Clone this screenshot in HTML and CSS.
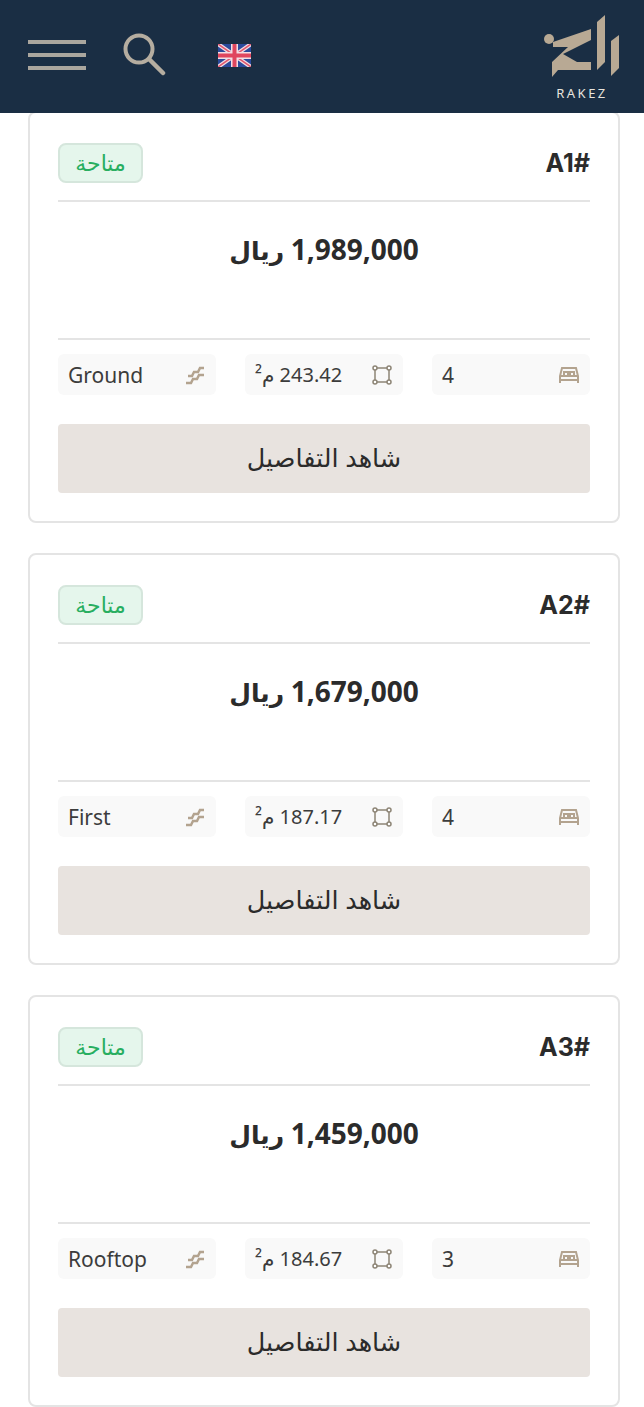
FILE: index.html
```html
<!DOCTYPE html>
<html lang="ar" dir="rtl">
<head>
    <meta charset="UTF-8">
    <meta name="viewport" content="width=device-width, initial-scale=1.0">
    <title>Rakez</title>
    <link rel="stylesheet" href="styles.css">
</head>
<body>
    <header class="topbar">
        <div class="logo">
            <svg class="logo-mark" width="76" height="72" viewBox="0 0 76 72" fill="#b8a994">
                <path d="M67 27L75 21V54L67 62Z"/>
                <path d="M53 8L61 1V48L53 56Z"/>
                <path d="M47 18V29L19 43L33 51H47V59H14L8 66V51L24 36L9 36V31Z" transform="translate(0 -3)"/>
                <circle cx="5" cy="25" r="5"/>
            </svg>
            <span class="logo-name">RAKEZ</span>
        </div>
        <div class="top-tools">
            <svg class="flag" width="33" height="23" viewBox="0 0 33 23">
                <rect width="33" height="23" fill="#2b4a9b"/>
                <path d="M0 0L33 23M33 0L0 23" stroke="#f3dfe4" stroke-width="4"/>
                <path d="M0 0L33 23M33 0L0 23" stroke="#e0566e" stroke-width="1.5"/>
                <path d="M16.5 0V23M0 11.5H33" stroke="#f3dfe4" stroke-width="7"/>
                <path d="M16.5 0V23M0 11.5H33" stroke="#e0465e" stroke-width="4"/>
            </svg>
            <svg class="search" width="44" height="46" viewBox="0 0 44 46" fill="none" stroke="#b5ada0">
                <circle cx="17" cy="17" r="13.5" stroke-width="4"/>
                <path d="M27 27L41 41" stroke-width="4.5" stroke-linecap="round"/>
            </svg>
            <div class="burger"><span></span><span></span><span></span></div>
        </div>
    </header>

    <main class="list">
        <section class="card">
            <div class="card-head">
                <span class="unit">A1#</span>
                <span class="badge">متاحة</span>
            </div>
            <div class="price"><span>1,989,000</span> <span class="currency">ريال</span></div>
            <div class="specs">
                <div class="spec">
                    <svg class="ico" viewBox="0 0 22 20" fill="none" stroke="#b3a38f" stroke-width="2"><path d="M2 18V11L4 3H18L20 11V18M2 11H20M2 15H20M6 10V7H10V10M12 10V7H16V10"/></svg>
                    <span class="val" dir="ltr">4</span>
                </div>
                <div class="spec">
                    <svg class="ico" viewBox="0 0 20 20" fill="none" stroke="#8d8576" stroke-width="1.5"><rect x="3" y="3" width="14" height="14"/><circle cx="3" cy="3" r="2" fill="#fff"/><circle cx="17" cy="3" r="2" fill="#fff"/><circle cx="3" cy="17" r="2" fill="#fff"/><circle cx="17" cy="17" r="2" fill="#fff"/></svg>
                    <span class="area">243.42 م²</span>
                </div>
                <div class="spec">
                    <svg class="ico" viewBox="0 0 22 20" fill="none" stroke="#b3a38f" stroke-width="2.5"><path d="M2 18H7L9 14H13L15 10H20M4 11H8L10 7H14L16 3H20"/></svg>
                    <span class="val" dir="ltr">Ground</span>
                </div>
            </div>
            <a class="details">شاهد التفاصيل</a>
        </section>

        <section class="card">
            <div class="card-head">
                <span class="unit">A2#</span>
                <span class="badge">متاحة</span>
            </div>
            <div class="price"><span>1,679,000</span> <span class="currency">ريال</span></div>
            <div class="specs">
                <div class="spec">
                    <svg class="ico" viewBox="0 0 22 20" fill="none" stroke="#b3a38f" stroke-width="2"><path d="M2 18V11L4 3H18L20 11V18M2 11H20M2 15H20M6 10V7H10V10M12 10V7H16V10"/></svg>
                    <span class="val" dir="ltr">4</span>
                </div>
                <div class="spec">
                    <svg class="ico" viewBox="0 0 20 20" fill="none" stroke="#8d8576" stroke-width="1.5"><rect x="3" y="3" width="14" height="14"/><circle cx="3" cy="3" r="2" fill="#fff"/><circle cx="17" cy="3" r="2" fill="#fff"/><circle cx="3" cy="17" r="2" fill="#fff"/><circle cx="17" cy="17" r="2" fill="#fff"/></svg>
                    <span class="area">187.17 م²</span>
                </div>
                <div class="spec">
                    <svg class="ico" viewBox="0 0 22 20" fill="none" stroke="#b3a38f" stroke-width="2.5"><path d="M2 18H7L9 14H13L15 10H20M4 11H8L10 7H14L16 3H20"/></svg>
                    <span class="val" dir="ltr">First</span>
                </div>
            </div>
            <a class="details">شاهد التفاصيل</a>
        </section>

        <section class="card">
            <div class="card-head">
                <span class="unit">A3#</span>
                <span class="badge">متاحة</span>
            </div>
            <div class="price"><span>1,459,000</span> <span class="currency">ريال</span></div>
            <div class="specs">
                <div class="spec">
                    <svg class="ico" viewBox="0 0 22 20" fill="none" stroke="#b3a38f" stroke-width="2"><path d="M2 18V11L4 3H18L20 11V18M2 11H20M2 15H20M6 10V7H10V10M12 10V7H16V10"/></svg>
                    <span class="val" dir="ltr">3</span>
                </div>
                <div class="spec">
                    <svg class="ico" viewBox="0 0 20 20" fill="none" stroke="#8d8576" stroke-width="1.5"><rect x="3" y="3" width="14" height="14"/><circle cx="3" cy="3" r="2" fill="#fff"/><circle cx="17" cy="3" r="2" fill="#fff"/><circle cx="3" cy="17" r="2" fill="#fff"/><circle cx="17" cy="17" r="2" fill="#fff"/></svg>
                    <span class="area">184.67 م²</span>
                </div>
                <div class="spec">
                    <svg class="ico" viewBox="0 0 22 20" fill="none" stroke="#b3a38f" stroke-width="2.5"><path d="M2 18H7L9 14H13L15 10H20M4 11H8L10 7H14L16 3H20"/></svg>
                    <span class="val" dir="ltr">Rooftop</span>
                </div>
            </div>
            <a class="details">شاهد التفاصيل</a>
        </section>
    </main>
</body>
</html>
```

FILE: styles.css
```css
:root {
    --navy: #1a2e44;
    --line: #e4e4e4;
    --text: #2b2b2b;
}

* {
    margin: 0;
    padding: 0;
    box-sizing: border-box;
    font-family: 'Noto Sans', 'DejaVu Sans', sans-serif;
}

body {
    background-color: #fff;
    color: var(--text);
    overflow: hidden;
}

/* sits over the top of the first card */
.topbar {
    position: relative;
    z-index: 2;
    height: 113px;
    background-color: var(--navy);
    padding: 14px 24px 0 28px;
    display: flex;
    justify-content: space-between;
    align-items: flex-start;
}

.logo {
    display: flex;
    flex-direction: column;
    align-items: center;
    width: 76px;
}

.logo-name {
    margin-top: 0;
    font-size: 13px;
    line-height: 14px;
    letter-spacing: 2.5px;
    color: #e8e4de;
}

.top-tools {
    display: flex;
    align-items: center;
    padding-top: 18px;
}

.search {
    margin: 0 52px 0 36px;
}

.burger {
    width: 58px;
    display: flex;
    flex-direction: column;
    gap: 9px;
}

.burger span {
    height: 4px;
    background-color: #aaa69e;
}

.list {
    margin-top: -2px;
    padding: 0 24px 0 28px;
}

.card {
    margin-bottom: 30px;
    padding: 30px 28px 28px;
    border: 2px solid var(--line);
    border-radius: 8px;
}

.card-head {
    padding-bottom: 17px;
    border-bottom: 2px solid var(--line);
    display: flex;
    justify-content: space-between;
    align-items: center;
}

.unit {
    font-family: 'Inter', sans-serif;
    font-size: 25px;
    font-weight: 700;
    direction: ltr;
}

.badge {
    width: 85px;
    height: 40px;
    background-color: #e5f6ec;
    border: 2px solid #d5e6dc;
    border-radius: 8px;
    color: #27ae60;
    font-size: 22px;
    line-height: 34px;
    text-align: center;
}

.price {
    height: 138px;
    padding-top: 28px;
    font-family: 'Inter', 'DejaVu Sans', sans-serif;
    font-size: 28px;
    font-weight: 700;
    text-align: center;
    border-bottom: 2px solid var(--line);
}

.currency {
    font-size: 25px;
}

.specs {
    display: flex;
    justify-content: space-between;
    margin-top: 14px;
}

.spec {
    width: 158px;
    height: 41px;
    padding: 0 10px;
    background-color: #f9f9f9;
    border-radius: 6px;
    display: flex;
    justify-content: space-between;
    align-items: center;
    color: #3c3c3c;
}

.ico {
    width: 22px;
    height: 20px;
}

.val {
    font-size: 21px;
}

.area {
    font-size: 20px;
}

.details {
    display: block;
    height: 69px;
    margin-top: 29px;
    background-color: #e8e3df;
    border-radius: 4px;
    text-align: center;
    font-size: 25.5px;
    line-height: 66px;
}
```
